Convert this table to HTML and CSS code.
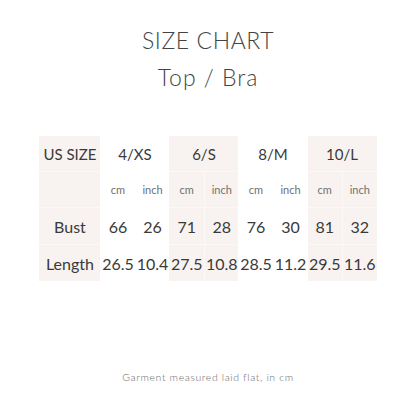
FILE: index.html
```html
<!DOCTYPE html>
<html>
<head>
<meta charset="utf-8">
<link rel="stylesheet" href="styles.css">
</head>
<body>
<div class="page">
  <h1 class="title">SIZE CHART</h1>
  <h2 class="subtitle">Top / Bra</h2>
  <table class="chart">
    <colgroup>
      <col class="c-label">
      <col class="c-a"><col class="c-b">
      <col class="c-a"><col class="c-b">
      <col class="c-a"><col class="c-b">
      <col class="c-a"><col class="c-b">
    </colgroup>
    <tr class="r-head">
      <td class="shade">US SIZE</td>
      <td colspan="2">4/XS</td>
      <td colspan="2" class="shade">6/S</td>
      <td colspan="2">8/M</td>
      <td colspan="2" class="shade">10/L</td>
    </tr>
    <tr class="r-unit">
      <td class="shade"></td>
      <td>cm</td><td>inch</td>
      <td class="shade sep">cm</td><td class="shade">inch</td>
      <td>cm</td><td>inch</td>
      <td class="shade sep">cm</td><td class="shade">inch</td>
    </tr>
    <tr class="r-val">
      <td class="shade">Bust</td>
      <td>66</td><td>26</td>
      <td class="shade sep">71</td><td class="shade">28</td>
      <td>76</td><td>30</td>
      <td class="shade sep">81</td><td class="shade">32</td>
    </tr>
    <tr class="r-val last">
      <td class="shade">Length</td>
      <td>26.5</td><td>10.4</td>
      <td class="shade sep">27.5</td><td class="shade">10.8</td>
      <td>28.5</td><td>11.2</td>
      <td class="shade sep">29.5</td><td class="shade">11.6</td>
    </tr>
  </table>
  <p class="note">Garment measured laid flat, in cm</p>
</div>
</body>
</html>
```
FILE: styles.css
```css
html, body {
  margin: 0;
  padding: 0;
  background: #ffffff;
}
.page {
  width: 416px;
  height: 416px;
  display: flex;
  flex-direction: column;
  align-items: center;
  font-family: Lato, "Open Sans", sans-serif;
  color: #3a3a3a;
}
.title {
  margin: 26px 0 0;
  font-size: 23px;
  font-weight: 300;
  letter-spacing: 0.6px;
  line-height: 28px;
  color: #444;
}
.subtitle {
  margin: 9px 0 0;
  font-size: 23px;
  font-weight: 300;
  letter-spacing: 1px;
  line-height: 28px;
  color: #444;
}
.chart {
  margin-top: 45px;
  border-collapse: collapse;
  table-layout: fixed;
  width: 336px;
}
.c-label { width: 61px; }
.chart col.c-a { width: 35px; }
.chart col.c-b { width: 34px; }
.chart td {
  padding: 0;
  text-align: center;
  vertical-align: middle;
  white-space: nowrap;
  border-bottom: 1px solid transparent;
}
.chart td.shade {
  background: #f8f3f0;
  border-bottom-color: #fbf8f6;
}
.chart td.sep {
  border-right: 1px solid #fbf8f6;
}
.chart tr.last td { border-bottom: none; }
.r-head td {
  height: 35px;
  font-size: 15px;
  color: #3a3a3a;
}
.r-unit td {
  height: 35px;
  font-size: 11px;
  color: #707070;
}
.r-val td {
  height: 36px;
  font-size: 16px;
  color: #3a3a3a;
}
.note {
  margin: 90px 0 0;
  font-size: 10.5px;
  letter-spacing: 0.6px;
  color: #6a6a6a;
  font-weight: 300;
}
```
